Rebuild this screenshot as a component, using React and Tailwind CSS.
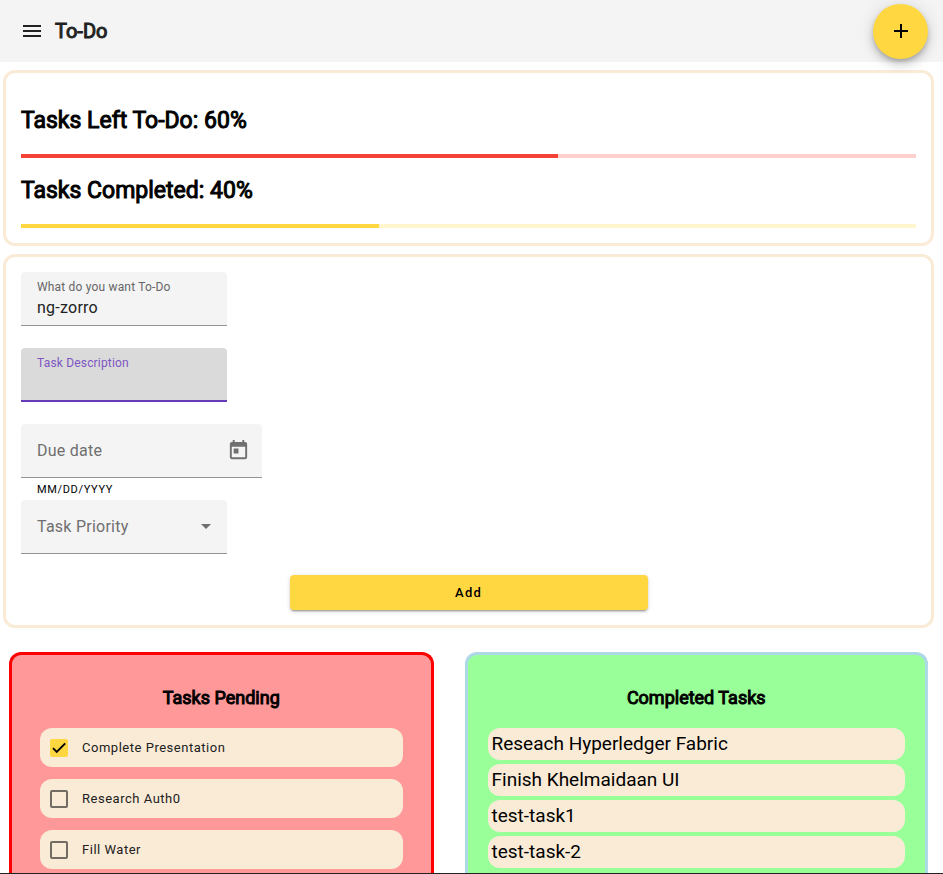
import { useState } from "react";

const PENDING = [
  { id: "presentation", title: "Complete Presentation", done: true },
  { id: "auth0", title: "Research Auth0", done: false },
  { id: "water", title: "Fill Water", done: false },
];

const COMPLETED = ["Reseach Hyperledger Fabric", "Finish Khelmaidaan UI", "test-task1", "test-task-2"];

function Progress({ title, value, track, bar }) {
  return (
    <div>
      <h2 className="mt-[19px] mb-[19px] text-[23px] leading-7 font-normal [-webkit-text-stroke:1px_currentColor]">
        {title}: {value}%
      </h2>
      <div role="progressbar" aria-valuenow={value} aria-label={title} className={`h-1 ${track}`}>
        <div className={`h-full ${bar}`} style={{ width: `${value}%` }} />
      </div>
    </div>
  );
}

function PendingTask({ task }) {
  const [done, setDone] = useState(task.done);
  return (
    <li className="flex h-[39px] items-center rounded-xl bg-[#faebd7] pl-[10px]">
      <span className="grid size-[18px] place-items-center">
        <input
          id={task.id}
          type="checkbox"
          checked={done}
          onChange={() => setDone(!done)}
          className="col-start-1 row-start-1 size-[18px] appearance-none rounded-xs border-2 border-[#736c63] checked:border-[#ffd740] checked:bg-[#ffd740]"
        />
        {done && (
          <svg viewBox="0 0 24 24" className="pointer-events-none col-start-1 row-start-1 size-[18px]" fill="none" stroke="#000" strokeWidth="2.6">
            <path d="M4 12.2 9 17.2 20.3 5.8" />
          </svg>
        )}
      </span>
      <label htmlFor={task.id} className="pl-[14px] text-[13px] leading-5 tracking-[0.04em] text-[#212121]">
        {task.title}
      </label>
    </li>
  );
}

export default function App() {
  const [name, setName] = useState("ng-zorro");
  return (
    <div className="flex h-screen flex-col border-b border-[#222] bg-white font-[Roboto,sans-serif] text-black">
      <header className="flex h-[62px] shrink-0 items-center bg-[#f4f4f4] pr-[15px] pl-5">
        <button type="button" aria-label="Menu" className="text-[#212121]">
          <svg viewBox="0 0 24 24" className="size-6" fill="currentColor">
            <path d="M3 18h18v-2H3v2zm0-5h18v-2H3v2zm0-7v2h18V6H3z" />
          </svg>
        </button>
        <h1 className="ml-[11px] text-xl font-normal text-[#212121] [-webkit-text-stroke:1px_currentColor]">To-Do</h1>
        <button
          type="button"
          aria-label="New task"
          className="relative ml-auto grid size-[55px] place-items-center rounded-full bg-[#ffd740] shadow-[0_3px_5px_-1px_rgba(0,0,0,0.2),0_6px_10px_0_rgba(0,0,0,0.14),0_1px_18px_0_rgba(0,0,0,0.12)]"
        >
          <svg viewBox="0 0 24 24" className="size-6" fill="currentColor">
            <path d="M19 13h-6v6h-2v-6H5v-2h6V5h2v6h6v2z" />
          </svg>
        </button>
      </header>

      <main className="min-h-0 flex-1 overflow-hidden pt-2 pr-[9px] pl-[3px]">
        <section className="rounded-xl border-3 border-[#faebd7] p-[15px]">
          <Progress title="Tasks Left To-Do" value={60} track="bg-[#fdd0cd]" bar="bg-[#f44336]" />
          <Progress title="Tasks Completed" value={40} track="bg-[#fff5cf]" bar="bg-[#ffd740]" />
        </section>

        <form className="mt-2 rounded-xl border-3 border-[#faebd7] p-[15px]" onSubmit={(e) => e.preventDefault()}>
          <div className="flex h-[54px] w-[206px] flex-col rounded-t border-b border-[#949494] bg-[#f4f4f4] px-4 pt-[6px]">
            <label htmlFor="task-name" className="text-xs leading-[18px] tracking-[0.015em] text-[#666]">
              What do you want To-Do
            </label>
            <input
              id="task-name"
              value={name}
              onChange={(e) => setName(e.target.value)}
              className="w-full bg-transparent text-base leading-6 tracking-[0.015em] text-[#212121] outline-none"
            />
          </div>

          <div className="mt-[22px] flex h-[54px] w-[206px] flex-col rounded-t border-b-2 border-[#673ab7] bg-[#dadada] px-4 pt-[6px]">
            <label htmlFor="task-description" className="text-xs leading-[18px] tracking-[0.015em] text-[#7e57c2]">
              Task Description
            </label>
            <input
              id="task-description"
              className="w-full bg-transparent text-base leading-6 tracking-[0.015em] text-[#212121] outline-none"
            />
          </div>

          <div className="mt-[22px] flex h-[54px] w-[241px] items-center rounded-t border-b border-[#949494] bg-[#f4f4f4] pr-3 pl-4">
            <input
              id="due-date"
              aria-label="Due date"
              placeholder="Due date"
              className="min-w-0 flex-1 bg-transparent text-base leading-6 tracking-[0.015em] text-[#212121] outline-none placeholder:text-[#6f6f6f]"
            />
            <button type="button" aria-label="Open calendar" className="text-[#6f6f6f]">
              <svg viewBox="0 0 24 24" className="size-[23px]" fill="currentColor">
                <path d="M19 3h-1V1h-2v2H8V1H6v2H5c-1.11 0-1.99.9-1.99 2L3 19c0 1.1.89 2 2 2h14c1.1 0 2-.9 2-2V5c0-1.1-.9-2-2-2zm0 16H5V8h14v11zM7 10h5v5H7z" />
              </svg>
            </button>
          </div>
          <p className="h-[22px] pt-[3px] pl-4 text-[11px] leading-[18px] tracking-[0.06em]">MM/DD/YYYY</p>

          <div className="grid h-[54px] w-[206px] items-center rounded-t border-b border-[#949494] bg-[#f4f4f4]">
            <label
              htmlFor="task-priority"
              className="col-start-1 row-start-1 flex items-center justify-between px-4 text-base leading-6 tracking-[0.015em] text-[#6f6f6f]"
            >
              Task Priority
              <svg viewBox="0 0 10 5" className="h-[5px] w-[10px]" fill="currentColor">
                <path d="M0 0h10L5 5z" />
              </svg>
            </label>
            <select
              id="task-priority"
              className="col-start-1 row-start-1 h-full w-full appearance-none bg-transparent px-4 outline-none"
            />
          </div>

          <button
            type="submit"
            className="mx-auto mt-[21px] block h-[35px] w-2/5 rounded bg-[#ffd740] pt-px text-[13px] font-medium tracking-[0.09em] shadow-[0_3px_1px_-2px_rgba(0,0,0,0.2),0_2px_2px_0_rgba(0,0,0,0.14),0_1px_5px_0_rgba(0,0,0,0.12)]"
          >
            Add
          </button>
        </form>

        <div className="mt-6 grid grid-cols-[425fr_464fr] gap-[31px] pr-[6px] pl-[6px]">
          <section className="rounded-t-xl border-3 border-b-0 border-[#ff0000] bg-[#ff9999] px-7 pt-8 pb-10">
            <h3 className="mb-[19px] text-center text-lg leading-[22px] font-normal [-webkit-text-stroke:1px_currentColor]">Tasks Pending</h3>
            <ul className="flex flex-col gap-3">
              {PENDING.map((task) => (
                <PendingTask key={task.id} task={task} />
              ))}
            </ul>
          </section>
          <section className="rounded-t-xl border-3 border-b-0 border-[#add8e6] bg-[#99ff99] px-5 pt-8 pb-10">
            <h3 className="mb-[19px] text-center text-lg leading-[22px] font-normal [-webkit-text-stroke:1px_currentColor]">Completed Tasks</h3>
            <ul className="flex flex-col gap-1">
              {COMPLETED.map((title) => (
                <li key={title} className="h-8 rounded-xl bg-[#faebd7] px-1 text-[19px] leading-8">
                  {title}
                </li>
              ))}
            </ul>
          </section>
        </div>
      </main>
    </div>
  );
}
